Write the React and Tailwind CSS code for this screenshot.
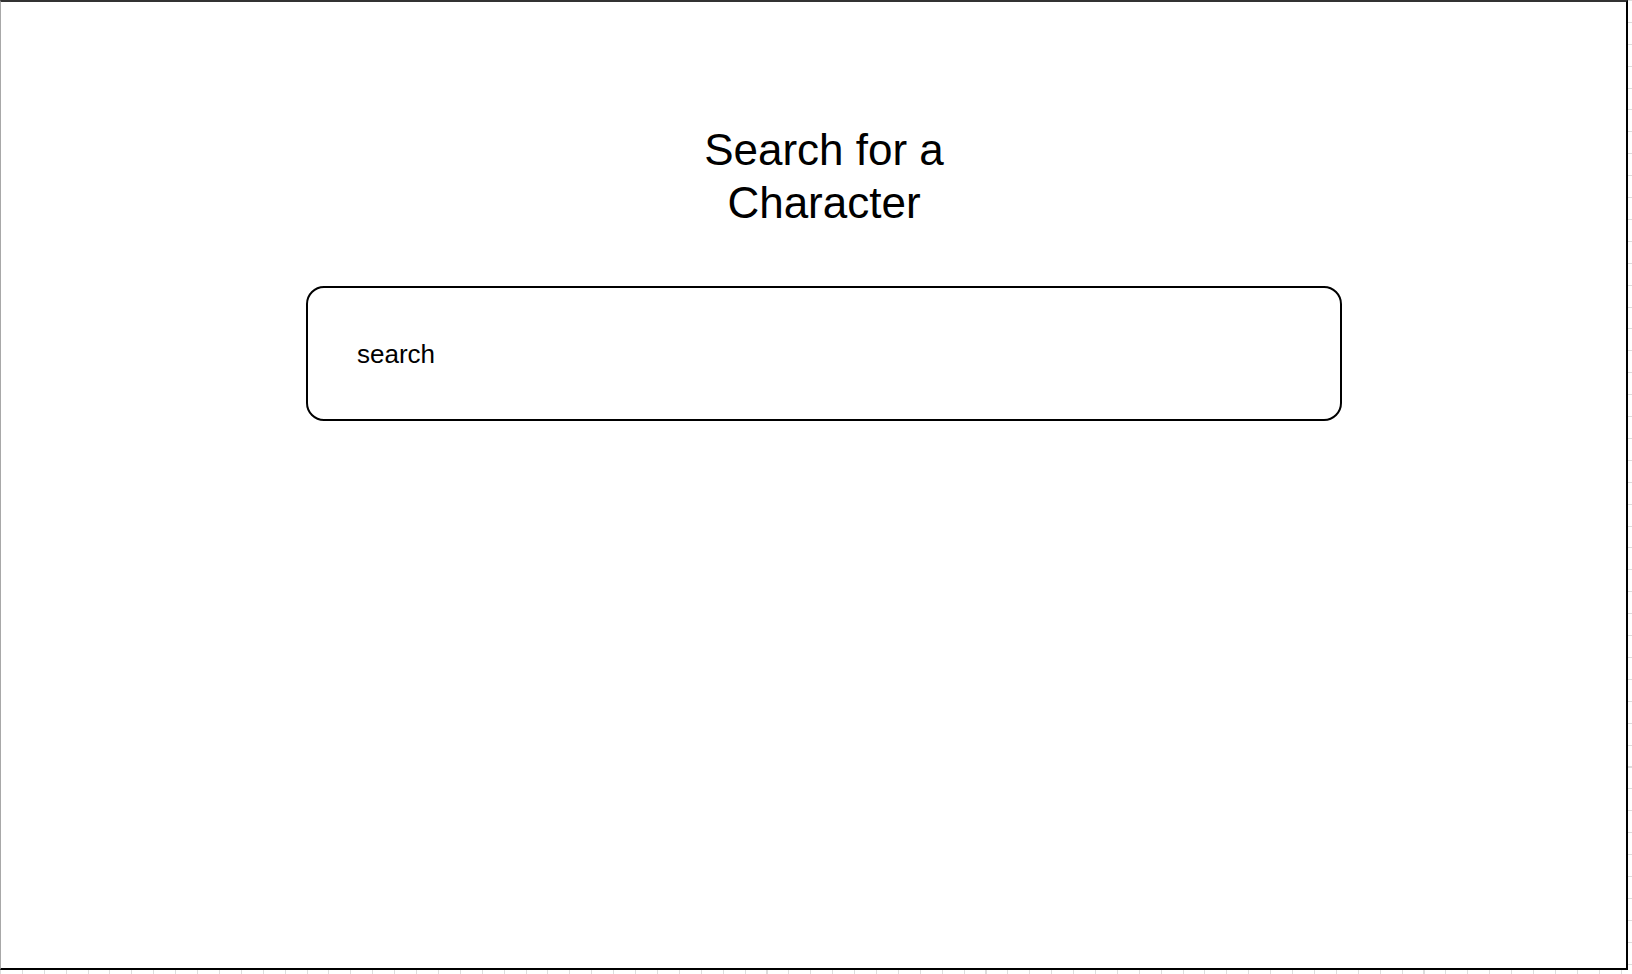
export default function App() {
    return (
        <div
            className="relative h-[974px] w-[1632px] overflow-hidden bg-white bg-[repeating-linear-gradient(90deg,#dcdcdc_0_1px,transparent_1px_21.9px)]"
            style={{ fontFamily: '"Liberation Sans", Arial, sans-serif' }}
        >
            {/* tick strip on the right edge */}
            <div className="absolute right-0 top-0 h-full w-[4px] bg-white bg-[repeating-linear-gradient(180deg,#dcdcdc_0_1px,transparent_1px_21.9px)]" />

            {/* Wireframe canvas */}
            <div className="relative h-[970px] w-[1628px] border-b-2 border-l border-r-2 border-t-2 border-b-black border-l-[#a8a8a8] border-r-black border-t-[#333333] bg-white">
                <div className="ml-[305px] flex w-[1036px] flex-col items-center">
                    <h1 className="mt-[121px] text-center text-[44px] font-normal leading-[53px] text-black">
                        Search for a
                        <br />
                        Character
                    </h1>

                    <div className="mt-[57px] flex h-[135px] w-full items-center rounded-[18px] border-2 border-black pl-[49px]">
                        <span className="text-[26px] leading-none text-black">search</span>
                    </div>
                </div>
            </div>
        </div>
    )
}
